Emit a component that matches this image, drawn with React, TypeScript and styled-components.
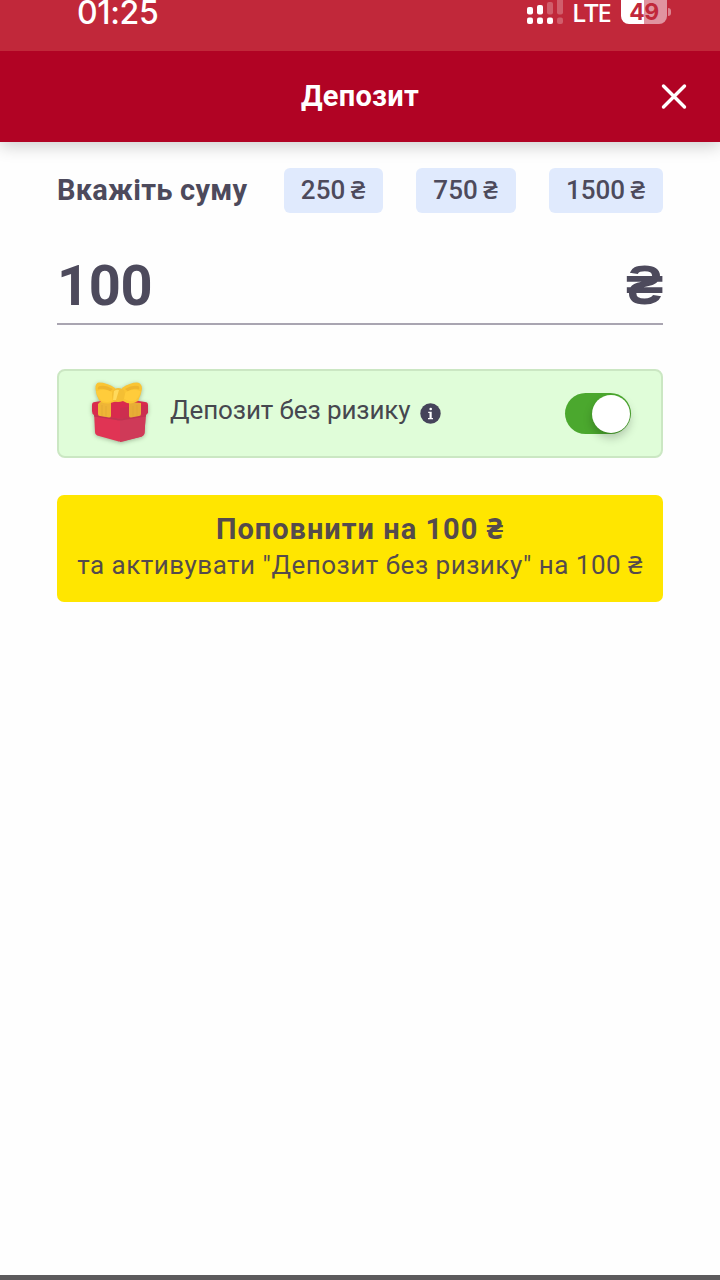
import React, { useState } from 'react';
import styled, { createGlobalStyle } from 'styled-components';

const GlobalStyle = createGlobalStyle`
  * { box-sizing: border-box; }
  html, body { margin: 0; padding: 0; background: #fefefe; }
  body { font-family: Roboto, "Noto Sans", sans-serif; color: #4d4a5c; }
  button { font: inherit; color: inherit; border: 0; padding: 0; margin: 0; background: none; }
`;

const Screen = styled.div`
  width: 720px;
  height: 1280px;
  display: flex;
  flex-direction: column;
  overflow: hidden;
  background: #fefefe;
`;

const StatusBar = styled.div`
  position: relative;
  z-index: 1;
  height: 51px;
  flex: none;
  display: flex;
  justify-content: space-between;
  align-items: flex-start;
  padding: 0 53px 0 77px;
  background: #c1283a;
  color: #fff;
`;

const Clock = styled.span`
  font: 500 32px/26px Inter, sans-serif;
  letter-spacing: -0.35px;
`;

const StatusIcons = styled.div`
  display: flex;
  align-items: flex-start;
`;

const Carrier = styled.span`
  width: 38px;
  font: 500 26px/25px "Noto Sans", sans-serif;
  letter-spacing: -1.4px;
  margin: 0 11px 0 9px;
  white-space: nowrap;
`;

const Battery = styled.div`
  position: relative;
  width: 46px;
  height: 24px;
  border-radius: 0 0 8px 8px;
  background: linear-gradient(90deg, #fff 50%, #e094a0 50%);
  color: #c1283a;
  text-align: center;
  font: 700 23px/24px Inter, sans-serif;
  letter-spacing: -0.5px;

  &::after {
    content: '';
    position: absolute;
    right: -4px;
    top: 8px;
    width: 3px;
    height: 8px;
    border-radius: 0 3px 3px 0;
    background: #dc8490;
  }
`;

const Header = styled.header`
  height: 91px;
  flex: none;
  display: grid;
  grid-template-columns: 60px 1fr 60px;
  align-items: center;
  justify-items: center;
  padding: 0 16px;
  background: #b10324;
  color: #fff;
  box-shadow: 0 4px 16px rgba(0, 0, 0, 0.2);
`;

const Title = styled.h1`
  grid-column: 2;
  margin: 0 0 2px;
  font-size: 29px;
  line-height: 34px;
  font-weight: 700;
  letter-spacing: 0.25px;
`;

const CloseButton = styled.button`
  width: 28px;
  height: 28px;
  svg { display: block; }
`;

const Form = styled.main`
  flex: 1;
  display: flex;
  flex-direction: column;
  padding: 26px 57px 0;
`;

const AmountHeader = styled.div`
  display: flex;
  align-items: center;
  justify-content: space-between;
  height: 45px;
`;

const Label = styled.span`
  width: 193px;
  white-space: nowrap;
  font-size: 29px;
  line-height: 45px;
  font-weight: 700;
  letter-spacing: 0.25px;
`;

const Presets = styled.div`
  display: flex;
  gap: 33px;
`;

const Preset = styled.button<{ $width: number }>`
  width: ${(p) => p.$width}px;
  height: 45px;
  padding: 0 1px 3px 0;
  border-radius: 6px;
  background: #e0eafd;
  font-size: 26px;
  font-weight: 500;
  white-space: nowrap;
  word-spacing: -1px;
`;

const AmountField = styled.div`
  display: flex;
  justify-content: space-between;
  height: 86px;
  margin-top: 26px;
  padding-top: 15px;
  border-bottom: 2px solid #a9a5b1;
  font-size: 56px;
  line-height: 64px;
  font-weight: 700;
  letter-spacing: -0.4px;
`;

const Currency = styled.span`
  font-family: "Open Sans", sans-serif;
  font-weight: 800;
  line-height: 56px;
`;

const BonusCard = styled.div`
  display: flex;
  align-items: center;
  height: 89px;
  margin-top: 44px;
  padding: 0 30px 0 31px;
  border: 2px solid #cbe7c3;
  border-radius: 8px;
  background: #e0fdd9;
`;

const BonusText = styled.span`
  margin: 0 9px 7px 20px;
  color: #46474f;
  font-size: 26px;
  line-height: 32px;
  letter-spacing: -0.1px;
  white-space: nowrap;
`;

const Toggle = styled.button<{ $on: boolean }>`
  display: flex;
  align-items: center;
  justify-content: ${(p) => (p.$on ? 'flex-end' : 'flex-start')};
  width: 66px;
  height: 41px;
  margin-left: auto;
  padding: 0 1px;
  border-radius: 21px;
  background: ${(p) => (p.$on ? '#4ba82e' : '#b9b9b9')};
`;

const Knob = styled.span`
  width: 38px;
  height: 38px;
  border-radius: 50%;
  background: #fff;
  box-shadow: 0 5px 10px rgba(0, 0, 0, 0.22);
`;

const SubmitButton = styled.button`
  display: flex;
  flex-direction: column;
  align-items: center;
  height: 107px;
  margin-top: 37px;
  padding-top: 16px;
  border-radius: 7px;
  background: #ffe600;
  color: #554b4c;
  white-space: nowrap;
`;

const SubmitTitle = styled.span`
  font-size: 29px;
  line-height: 36px;
  font-weight: 700;
  letter-spacing: 1px;
`;

const SubmitNote = styled.span`
  font-size: 26px;
  line-height: 36px;
  letter-spacing: 0.5px;
`;

const BottomEdge = styled.div`
  height: 5px;
  flex: none;
  background: #5c5a5c;
`;

const Signal = () => (
  <svg width="36" height="26" viewBox="0 0 36 26" fill="#fff">
    <rect x="0" y="7" width="6" height="7.5" rx="2" />
    <rect x="10" y="5" width="6" height="9.5" rx="2" />
    <rect x="20" y="2" width="6" height="12.5" rx="2" opacity=".25" />
    <rect x="30" y="-4" width="6" height="18.5" rx="2" opacity=".25" />
    <rect x="0" y="17.5" width="6" height="6.5" rx="2" />
    <rect x="10" y="17.5" width="6" height="6.5" rx="2" />
    <rect x="20" y="17.5" width="6" height="6.5" rx="2" />
    <rect x="30" y="17.5" width="6" height="6.5" rx="2" opacity=".25" />
  </svg>
);

const GiftArt = styled.svg`
  filter: drop-shadow(0 1px 2px rgba(60, 80, 50, 0.4));
`;

const Gift = () => (
  <GiftArt width="60" height="66" viewBox="0 0 60 66">
    <path d="M4 30H56L54.500 52Q54 55 50 56L33 60Q30 61 27 60L9 55Q5 54 5 51Z" fill="#e03454" />
    <path d="M30 36L56 31L54.500 52Q54 55 50 56L33 60.500L30 61Z" fill="#cf3a58" />
    <path d="M2 24Q2 21 5 21L30 17L55 21Q58 21 58 24V30Q58 33 55 34L34 37Q30 38 26 37L4 34Q2 33 2 30Z" fill="#d92a4d" />
    <path d="M30 27L58 24V30Q58 33 55 34L34 37L30 37.500Z" fill="#cc2e4f" />
    <path d="M4 34L26 37Q30 38 34 37L56 34V35.500L34 39Q30 40 26 39L4 35.500Z" fill="#c23250" />
    <path d="M10 21L21 21V35Q21 36.500 19 36.500L10 35Q8 35 8 33V23Z" fill="#efb536" />
    <path d="M39 21L51 22V33Q51 35 49 35L41 36.500Q39 36.500 39 35V25Z" fill="#e8ad36" />
    <path d="M12 24V35M16 25V36M43 25V36M47 24V35" stroke="#dfa634" strokeWidth=".7" fill="none" />
    <path d="M25 7Q17 1.500 9 1.500Q5 2 5.500 8Q6 14 9 19Q12 23 19 22.500L27 20ZM32 7Q40 1.500 47 1.500Q52 2 52 8Q51 14 48 20Q43 23.500 37 22L31 19Z" fill="#fac534" />
    <path d="M23 8Q15 3.500 10 5Q7 6 8 8.500Q14 6.500 20 10.500ZM35 8Q42 3.500 48 5Q50 6 49 8.500Q43 6.500 38 10.500Z" fill="#eeb52e" />
    <path d="M6 10.500Q14 7 22 11L25 18Q19 23 12 20Q8 17 6 10.500ZM51 10.500Q44 7 36 11L33 17Q39 22 46 19Q49 16 51 10.500Z" fill="#ffcc3b" />
    <path d="M23 9Q28 5 34 9Q36 14 33 20Q28 22 23 20Q21 14 23 9Z" fill="#f4bf34" />
    <path d="M24 10Q27 8 29 9L26 19L23 19Z" fill="#ffda5c" />
  </GiftArt>
);

const Info = () => (
  <svg width="21" height="21" viewBox="0 0 21 21">
    <circle cx="10.500" cy="10.500" r="10.200" fill="#45445a" />
    <circle cx="10.700" cy="6" r="1.300" fill="#fff" />
    <path d="M8.200 8.700h3.500v6.300h1.300v1.200H8v-1.200h1.500v-5.100H8.200z" fill="#fff" />
  </svg>
);

const presets = [
  { amount: 250, width: 99 },
  { amount: 750, width: 100 },
  { amount: 1500, width: 114 },
];

export default function App() {
  const [amount, setAmount] = useState(100);
  const [bonus, setBonus] = useState(true);

  return (
    <Screen>
      <GlobalStyle />
      <StatusBar>
        <Clock>01:25</Clock>
        <StatusIcons>
          <Signal />
          <Carrier>LTE</Carrier>
          <Battery>49</Battery>
        </StatusIcons>
      </StatusBar>
      <Header>
        <Title>Депозит</Title>
        <CloseButton aria-label="Закрити">
          <svg width="28" height="28" viewBox="0 0 28 28" fill="none" stroke="#fff" strokeWidth="3.4" strokeLinecap="round">
            <path d="M3.500 3 24.500 24M24.500 3 3.500 24" />
          </svg>
        </CloseButton>
      </Header>
      <Form>
        <AmountHeader>
          <Label>Вкажіть суму</Label>
          <Presets>
            {presets.map((p) => (
              <Preset key={p.amount} $width={p.width} onClick={() => setAmount(p.amount)}>
                {p.amount} ₴
              </Preset>
            ))}
          </Presets>
        </AmountHeader>
        <AmountField>
          <span>{amount}</span>
          <Currency>₴</Currency>
        </AmountField>
        <BonusCard>
          <Gift />
          <BonusText>Депозит без ризику</BonusText>
          <Info />
          <Toggle $on={bonus} role="switch" aria-checked={bonus} onClick={() => setBonus(!bonus)}>
            <Knob />
          </Toggle>
        </BonusCard>
        <SubmitButton>
          <SubmitTitle>Поповнити на {amount} ₴</SubmitTitle>
          <SubmitNote>та активувати "Депозит без ризику" на {amount} ₴</SubmitNote>
        </SubmitButton>
      </Form>
      <BottomEdge />
    </Screen>
  );
}
